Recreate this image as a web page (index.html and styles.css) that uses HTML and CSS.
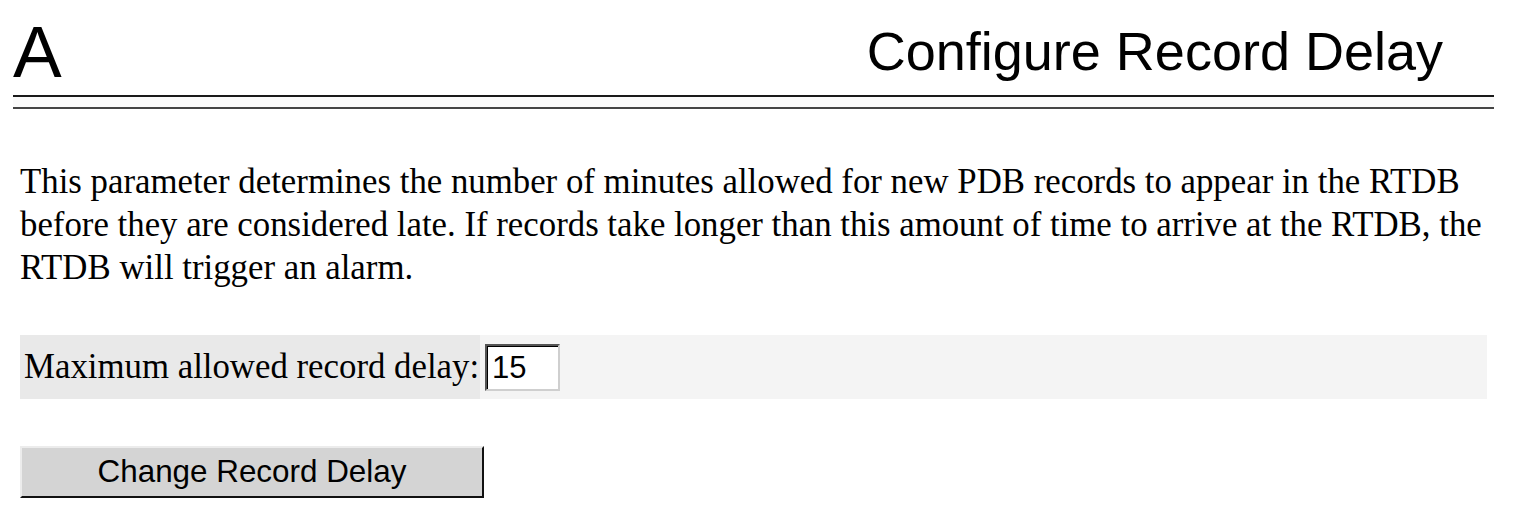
FILE: index.html
```html
<!DOCTYPE html>
<html>
<head>
<meta charset="utf-8">
<title>Configure Record Delay</title>
<link rel="stylesheet" href="styles.css">
</head>
<body>
<header class="top">
  <div class="logo">A</div>
  <h1 class="title">Configure Record Delay</h1>
</header>
<div class="rule"></div>
<main class="content">
  <p class="desc">This parameter determines the number of minutes allowed for new PDB records to appear in the RTDB<br>before they are considered late. If records take longer than this amount of time to arrive at the RTDB, the<br>RTDB will trigger an alarm.</p>
  <form class="form">
    <div class="row">
      <label class="label" for="delay">Maximum allowed record delay:</label>
      <div class="field"><input id="delay" class="input" type="text" value="15"></div>
    </div>
    <button type="button" class="btn">Change Record Delay</button>
  </form>
</main>
</body>
</html>
```

FILE: styles.css
```css
html, body {
  margin: 0;
  padding: 0;
  background: #ffffff;
  color: #000000;
}
body {
  width: 1540px;
  height: 520px;
  overflow: hidden;
}
.top {
  display: flex;
  justify-content: space-between;
  align-items: flex-end;
  padding: 0 97px 0 13px;
  height: 95px;
  font-family: "Liberation Sans", Arial, sans-serif;
}
.logo {
  font-size: 73px;
  line-height: 73px;
  padding-bottom: 7px;
}
.title {
  margin: 0;
  font-weight: normal;
  font-size: 54px;
  line-height: 54px;
  padding-bottom: 17px;
}
.rule {
  margin: 0 46px 0 13px;
  height: 10px;
  background: #fafafa;
  border-top: 2px solid #1a1a1a;
  border-bottom: 2px solid #444444;
}
.content {
  padding: 0 53px 0 20px;
  font-family: "Liberation Serif", "Times New Roman", serif;
}
.desc {
  margin: 51px 0 0 0;
  font-size: 34.8px;
  line-height: 43px;
  white-space: nowrap;
}
.form {
  margin: 0;
}
.row {
  display: flex;
  align-items: stretch;
  margin-top: 46px;
  height: 64px;
  background: #f4f4f4;
}
.label {
  display: flex;
  align-items: center;
  background: #e9e9e9;
  width: 456px;
  padding-left: 4px;
  font-size: 34.8px;
}
.field {
  display: flex;
  align-items: center;
  padding-left: 5px;
}
.input {
  box-sizing: border-box;
  width: 75px;
  height: 47px;
  margin: 0;
  padding: 2px 4px 0 5px;
  background: #ffffff;
  border: 2px solid;
  border-color: #555555 #cfcfcf #cfcfcf #555555;
  box-shadow: inset 1px 1px 0 #000000;
  font-family: "Liberation Sans", Arial, sans-serif;
  font-size: 31px;
  color: #000;
  outline: none;
}
.btn {
  display: block;
  box-sizing: border-box;
  margin-top: 47px;
  width: 464px;
  height: 52px;
  padding: 0;
  background: #d4d4d4;
  border: 2px solid;
  border-color: #ececec #111111 #111111 #ececec;
  font-family: "Liberation Sans", Arial, sans-serif;
  font-size: 31.4px;
  color: #000;
}
```
